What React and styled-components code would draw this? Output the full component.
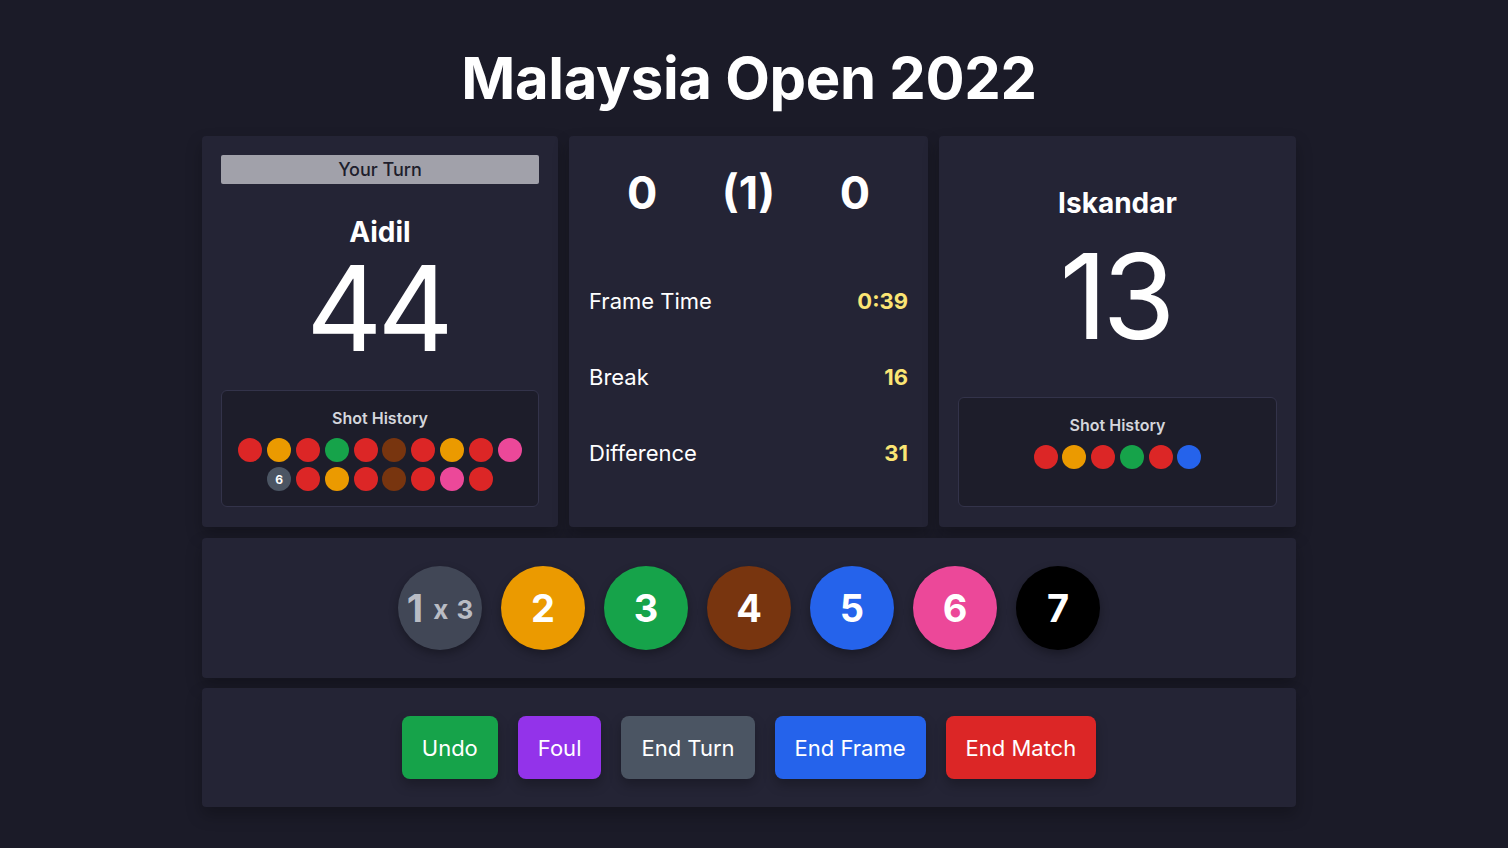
import React from "react";
import styled, { createGlobalStyle } from "styled-components";

const GlobalStyle = createGlobalStyle`
  * { box-sizing: border-box; }
  body {
    margin: 0;
    background: #1b1b28;
    font-family: Inter, "Noto Sans", "Liberation Sans", sans-serif;
    color: #ffffff;
  }
`;

const colors = {
  red: "#dc2626",
  yellow: "#eb9a00",
  green: "#16a34a",
  brown: "#78350f",
  blue: "#2563eb",
  pink: "#ec4899",
  black: "#000000",
  gray: "#4b5563",
};

const playerOne = {
  name: "Aidil",
  score: 44,
  active: true,
  shots: [
    "red", "yellow", "red", "green", "red", "brown", "red", "yellow", "red", "pink",
    { color: "gray", label: "6" }, "red", "yellow", "red", "brown", "red", "pink", "red",
  ],
};

const playerTwo = {
  name: "Iskandar",
  score: 13,
  active: false,
  shots: ["red", "yellow", "red", "green", "red", "blue"],
};

const stats = [
  { label: "Frame Time", value: "0:39" },
  { label: "Break", value: "16" },
  { label: "Difference", value: "31" },
];

const balls = [
  { color: "yellow", label: "2" },
  { color: "green", label: "3" },
  { color: "brown", label: "4" },
  { color: "blue", label: "5" },
  { color: "pink", label: "6" },
  { color: "black", label: "7" },
];

const actions = [
  { label: "Undo", color: "#16a34a" },
  { label: "Foul", color: "#9333ea" },
  { label: "End Turn", color: "#4b5563" },
  { label: "End Frame", color: "#2563eb" },
  { label: "End Match", color: "#dc2626" },
];

function PlayerCard({ player }) {
  return (
    <Card>
      {player.active && <TurnBar>Your Turn</TurnBar>}
      <PlayerName>{player.name}</PlayerName>
      <BigScore $active={player.active}>{player.score}</BigScore>
      <History>
        <HistoryTitle>Shot History</HistoryTitle>
        <ShotList>
          {player.shots.map((s, i) => {
            const shot = typeof s === "string" ? { color: s } : s;
            return (
              <Shot key={i} $color={colors[shot.color]}>
                {shot.label}
              </Shot>
            );
          })}
        </ShotList>
      </History>
    </Card>
  );
}

export default function App() {
  return (
    <>
      <GlobalStyle />
      <Page>
        <Title>Malaysia Open 2022</Title>
        <Board>
          <TopRow>
            <PlayerCard player={playerOne} />
            <MiddleCard>
              <FrameScore>
                <span>0</span>
                <span>(1)</span>
                <span>0</span>
              </FrameScore>
              {stats.map((s) => (
                <StatRow key={s.label}>
                  <span>{s.label}</span>
                  <StatValue>{s.value}</StatValue>
                </StatRow>
              ))}
            </MiddleCard>
            <PlayerCard player={playerTwo} />
          </TopRow>
          <Panel>
            <BallRow>
              <Ball $color="#414756" $text="#b9bcc4">
                <BigOne>1</BigOne>
                <Small>x 3</Small>
              </Ball>
              {balls.map((b) => (
                <Ball key={b.label} $color={colors[b.color]}>
                  {b.label}
                </Ball>
              ))}
            </BallRow>
          </Panel>
          <Panel>
            <ButtonRow>
              {actions.map((a) => (
                <ActionButton key={a.label} $color={a.color}>
                  {a.label}
                </ActionButton>
              ))}
            </ButtonRow>
          </Panel>
        </Board>
      </Page>
    </>
  );
}

const Page = styled.div`
  min-height: 848px;
  padding: 43px 10px 0 0;
  display: flex;
  flex-direction: column;
  align-items: center;
`;

const Title = styled.h1`
  margin: 0 0 23px;
  font-size: 58px;
  line-height: 70px;
  font-weight: 700;
  letter-spacing: -0.3px;
  color: #ffffff;
`;

const Board = styled.div`
  width: 1094px;
  display: flex;
  flex-direction: column;
  gap: 10.5px;
`;

const TopRow = styled.div`
  display: grid;
  grid-template-columns: 356px 359px 357px;
  gap: 11px;
`;

const Card = styled.div`
  background: #242435;
  border-radius: 4px;
  box-shadow: 0 8px 16px rgba(0, 0, 0, 0.25);
  padding: 19px 19px 20px;
  min-height: 391px;
  display: flex;
  flex-direction: column;
  align-items: stretch;
  text-align: center;
`;

const TurnBar = styled.div`
  background: #a1a1aa;
  color: #1e1e2c;
  height: 29px;
  line-height: 29px;
  font-size: 18px;
  font-weight: 500;
  border-radius: 2px;
`;

const PlayerName = styled.div`
  margin-top: 34px;
  font-size: 28px;
  line-height: 28px;
  font-weight: 700;
`;

const BigScore = styled.div`
  margin-top: ${(p) => (p.$active ? "3px" : "20px")};
  font-size: 118px;
  line-height: 118px;
  font-weight: 400;
  letter-spacing: -5px;
  padding-right: 5px;
`;

const History = styled.div`
  margin-top: auto;
  min-height: 110px;
  background: #1d1d2a;
  border: 1px solid #33334a;
  border-radius: 6px;
  padding: 15px 12px;
`;

const HistoryTitle = styled.div`
  font-size: 16px;
  line-height: 24px;
  font-weight: 600;
  color: #d4d6dc;
  margin-bottom: 8px;
`;

const ShotList = styled.div`
  display: flex;
  flex-wrap: wrap;
  justify-content: center;
  gap: 5px 4.8px;
`;

const Shot = styled.div`
  width: 24px;
  height: 24px;
  border-radius: 50%;
  background: ${(p) => p.$color};
  color: #ffffff;
  font-size: 12px;
  font-weight: 700;
  display: flex;
  align-items: center;
  justify-content: center;
`;

const MiddleCard = styled(Card)`
  padding: 30px 20px;
  text-align: left;
`;

const FrameScore = styled.div`
  display: grid;
  grid-template-columns: repeat(3, 1fr);
  text-align: center;
  font-size: 45px;
  line-height: 54px;
  font-weight: 700;
  margin-bottom: 43px;
`;

const StatRow = styled.div`
  height: 76px;
  display: flex;
  align-items: center;
  justify-content: space-between;
  font-size: 22px;
`;

const StatValue = styled.span`
  color: #fbe574;
  font-weight: 700;
`;

const Panel = styled.div`
  background: #242435;
  border-radius: 4px;
  box-shadow: 0 8px 16px rgba(0, 0, 0, 0.25);
  padding: 28px 20px;
`;

const BallRow = styled.div`
  display: flex;
  justify-content: center;
  gap: 19px;
`;

const Ball = styled.div`
  width: 84px;
  height: 84px;
  border-radius: 50%;
  background: ${(p) => p.$color};
  color: ${(p) => p.$text || "#ffffff"};
  box-shadow: 0 4px 10px rgba(0, 0, 0, 0.3);
  display: flex;
  align-items: center;
  justify-content: center;
  gap: 10px;
  font-size: 38px;
  font-weight: 700;
`;

const BigOne = styled.span`
  font-size: 38px;
`;

const Small = styled.span`
  font-size: 26px;
  padding-top: 4px;
  word-spacing: 2px;
`;

const ButtonRow = styled.div`
  display: flex;
  justify-content: center;
  gap: 20px;
`;

const ActionButton = styled.button`
  height: 63px;
  padding: 0 20px;
  border: none;
  border-radius: 8px;
  background: ${(p) => p.$color};
  color: #ffffff;
  font-family: inherit;
  font-size: 22px;
  font-weight: 400;
  box-shadow: 0 6px 12px rgba(0, 0, 0, 0.25);
  cursor: pointer;
`;
